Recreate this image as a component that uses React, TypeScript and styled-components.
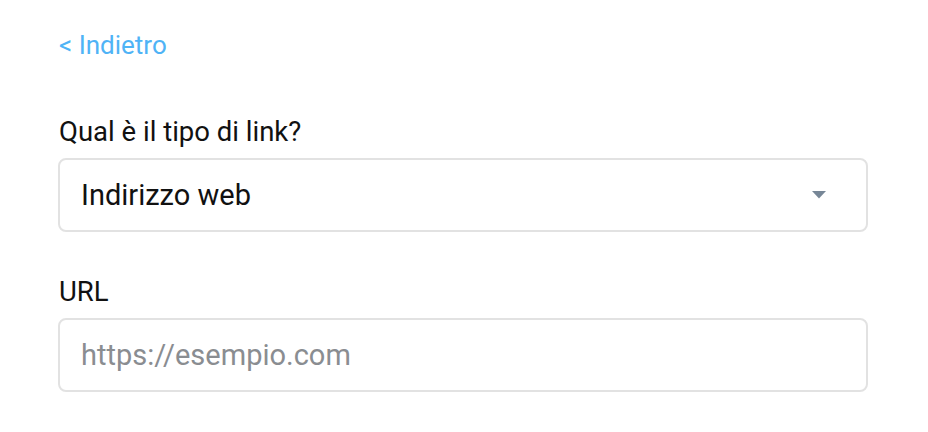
import React from "react";
import styled, { createGlobalStyle } from "styled-components";

const GlobalStyle = createGlobalStyle`
  html, body { margin: 0; padding: 0; background: #ffffff; }
  body { font-family: Roboto, "Liberation Sans", sans-serif; color: #1a1a1a; }
  * { box-sizing: border-box; }
`;

const Page = styled.div`
  width: 928px;
  height: 432px;
  padding: 29px 60px 0 58px;
  display: flex;
  flex-direction: column;
`;

const BackLink = styled.a`
  font-size: 26px;
  line-height: 32px;
  color: #4fb3f6;
  text-decoration: none;
  cursor: pointer;
  align-self: flex-start;
  margin-left: 1px;
`;

const Form = styled.div`
  margin-top: 55px;
  display: flex;
  flex-direction: column;
  gap: 44px;
`;

const Field = styled.div`
  display: flex;
  flex-direction: column;
  gap: 10px;
`;

const Label = styled.label`
  font-size: 27.5px;
  line-height: 32px;
  color: #111111;
  margin-left: 1px;
`;

const Box = styled.div`
  height: 74px;
  border: 2px solid #e2e2e2;
  border-radius: 8px;
  display: flex;
  align-items: center;
  padding: 0 39px 0 21px;
  background: #fff;
`;

const Value = styled.span<{ $placeholder?: boolean }>`
  flex: 1;
  font-size: 29px;
  line-height: 34px;
  color: ${(p) => (p.$placeholder ? "#8a8d91" : "#111111")};
`;

const Arrow = styled.svg`
  width: 16px;
  height: 8px;
  display: block;
`;

export default function App() {
  return (
    <>
      <GlobalStyle />
      <Page>
        <BackLink>&lt; Indietro</BackLink>
        <Form>
          <Field>
            <Label>Qual è il tipo di link?</Label>
            <Box>
              <Value>Indirizzo web</Value>
              <Arrow viewBox="0 0 16 8">
                <path d="M1 0 H15 L8 7.5 Z" fill="#778797" />
              </Arrow>
            </Box>
          </Field>
          <Field>
            <Label>URL</Label>
            <Box>
              <Value $placeholder>https://esempio.com</Value>
            </Box>
          </Field>
        </Form>
      </Page>
    </>
  );
}
